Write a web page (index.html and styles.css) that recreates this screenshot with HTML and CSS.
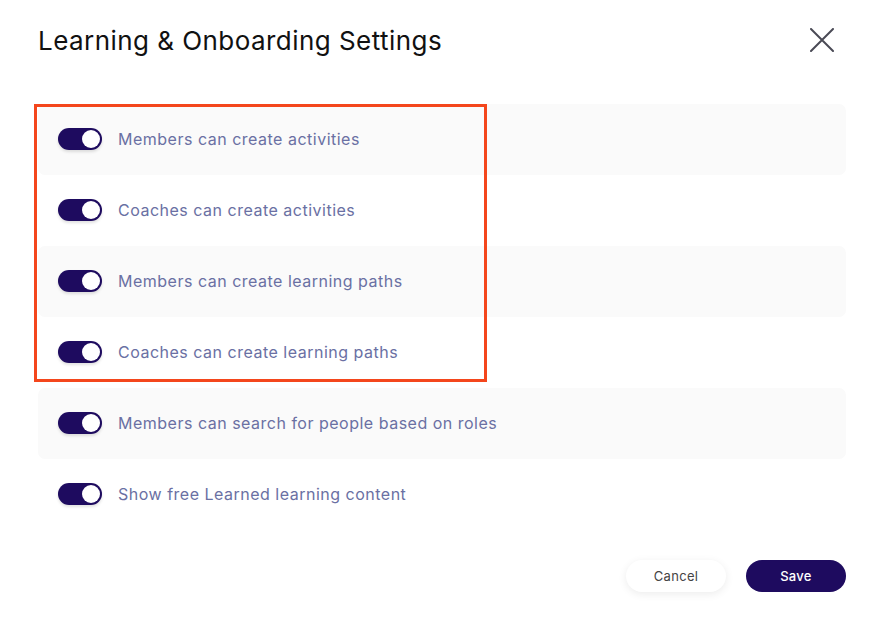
FILE: index.html
```html
<!DOCTYPE html>
<html>
<head>
<meta charset="utf-8">
<link rel="stylesheet" href="styles.css">
</head>
<body>
<div class="modal">
  <div class="header">
    <h1 class="title">Learning &amp; Onboarding Settings</h1>
    <button class="close" aria-label="Close">
      <svg width="24" height="24" viewBox="0 0 24 24"><path d="M1 1L23 23M23 1L1 23" stroke="#4a4a55" stroke-width="2" stroke-linecap="round" fill="none"/></svg>
    </button>
  </div>
  <div class="list">
    <div class="highlight"></div>
    <div class="row shaded"><span class="toggle"><span class="knob"></span></span><span class="label">Members can create activities</span></div>
    <div class="row"><span class="toggle"><span class="knob"></span></span><span class="label">Coaches can create activities</span></div>
    <div class="row shaded"><span class="toggle"><span class="knob"></span></span><span class="label">Members can create learning paths</span></div>
    <div class="row"><span class="toggle"><span class="knob"></span></span><span class="label">Coaches can create learning paths</span></div>
    <div class="row shaded"><span class="toggle"><span class="knob"></span></span><span class="label">Members can search for people based on roles</span></div>
    <div class="row"><span class="toggle"><span class="knob"></span></span><span class="label">Show free Learned learning content</span></div>
  </div>
  <div class="footer">
    <button class="btn cancel">Cancel</button>
    <button class="btn save">Save</button>
  </div>
</div>
</body>
</html>
```
FILE: styles.css
```css
* { box-sizing: border-box; }
html, body { margin: 0; padding: 0; background: #ffffff; }
body { font-family: "Inter", "Noto Sans", sans-serif; width: 886px; height: 622px; overflow: hidden; }
.modal { padding: 0 40px 0 38px; }
.header { display: flex; align-items: center; justify-content: space-between; height: 82px; padding-bottom: 2px; }
.title { margin: 0; font-size: 26px; font-weight: 400; color: #111; letter-spacing: 0.45px; }
.close { background: none; border: 0; padding: 0; width: 24px; height: 24px; margin-right: 12px; display: flex; }
.list { position: relative; margin-top: 22px; }
.row { display: flex; align-items: center; height: 71px; padding-left: 20px; padding-bottom: 1px; border-radius: 7px; }
.row.shaded { background: #fafafa; }
.toggle { width: 44px; height: 22px; border-radius: 11px; background: #1e0b5f; position: relative; flex: none; box-shadow: 0 2px 3px rgba(0,0,0,0.12); }
.knob { position: absolute; right: 2px; top: 2px; width: 18px; height: 18px; border-radius: 50%; background: #fff; }
.label { margin-left: 16px; font-size: 16px; color: #6a70a3; letter-spacing: 0.5px; }
.highlight { position: absolute; left: -4px; top: 0; width: 453px; height: 278px; border: 3px solid #f4461c; pointer-events: none; z-index: 2; }
.footer { display: flex; justify-content: flex-end; gap: 20px; margin-top: 30px; }
.btn { width: 100px; height: 32px; border-radius: 16px; border: 0; font-family: inherit; font-size: 13px; letter-spacing: 0.3px; }
.cancel { background: #fff; color: #444; box-shadow: 0 2px 8px rgba(0,0,0,0.08); }
.save { background: #1e0b5f; color: #fff; font-weight: 500; }
```
